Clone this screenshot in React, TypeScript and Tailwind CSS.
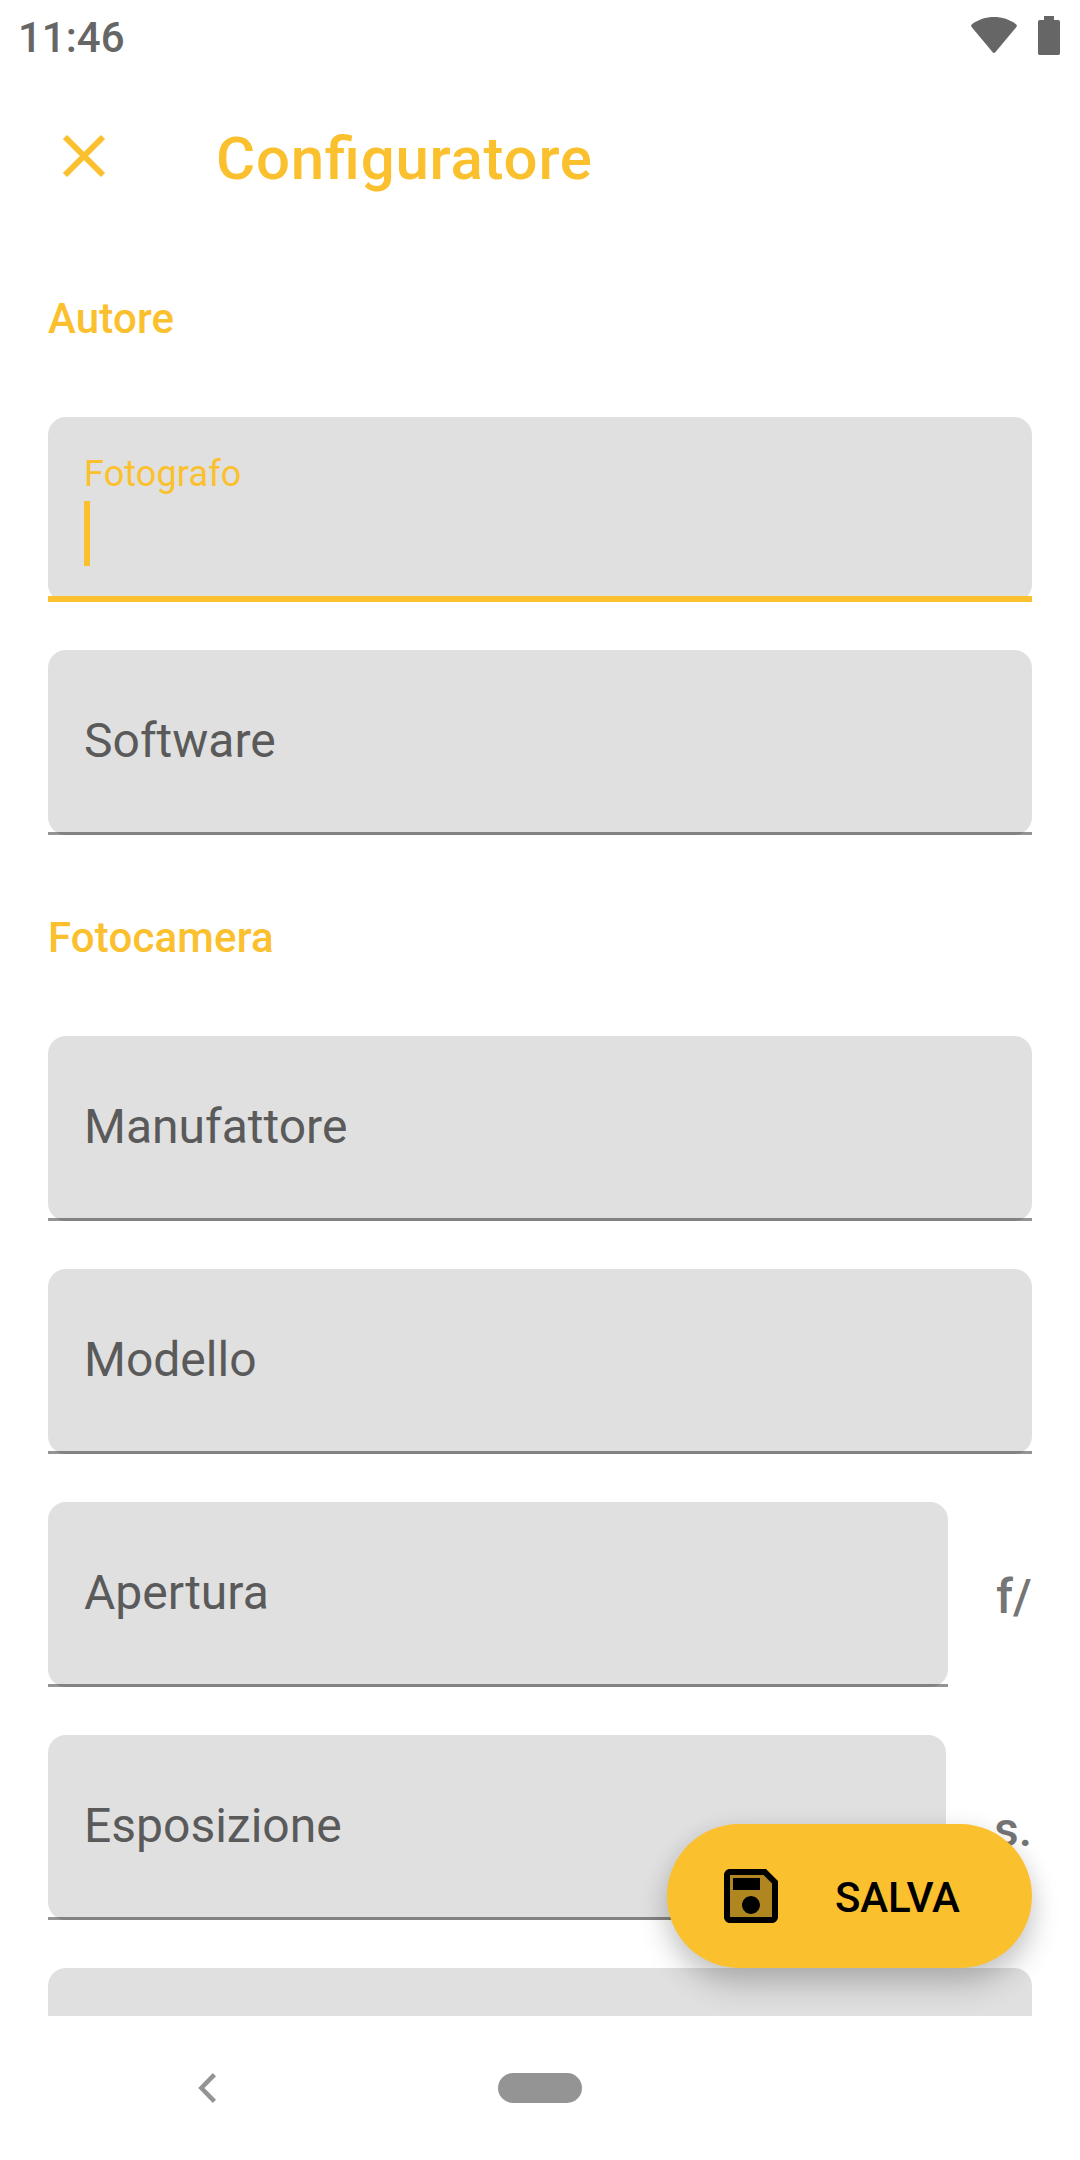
import React, { useState } from 'react';
import { clsx } from 'clsx';

type FieldProps = {
  label?: string;
  unit?: string;
  unitClass?: string;
  active?: boolean;
  onFocus?: () => void;
};

function StatusBar() {
  return (
    <div className="flex h-[72px] shrink-0 justify-between pl-[18px] pr-5 text-[#666666]">
      <span className="mt-[13px] text-[42px] leading-[50px] font-medium">11:46</span>
      <div className="flex items-start gap-[21px] pt-4">
        <svg className="mt-px h-9 w-[46px]" viewBox="0 0 46 36" fill="currentColor">
          <path d="M1 7.2C7 2.6 15 0 23 0s16 2.6 22 7.2c1 .8 1.1 1.8.4 2.7L24.3 35.2c-.8.9-1.8.9-2.6 0L.6 9.9C-.1 9 0 8 1 7.2z" />
        </svg>
        <svg className="h-[39px] w-[22px]" viewBox="0 0 22 39" fill="currentColor">
          <path d="M6 0h10v4h4.2c1 0 1.8.8 1.8 1.8v31.4c0 1-.8 1.8-1.8 1.8H1.8C.8 39 0 38.2 0 37.2V5.8C0 4.8.8 4 1.8 4H6z" />
        </svg>
      </div>
    </div>
  );
}

function TopBar() {
  return (
    <header className="flex h-[168px] shrink-0 items-center pl-12 text-[#fbc02d]">
      <button type="button" aria-label="Chiudi" className="size-[72px]">
        <svg className="size-[72px]" viewBox="0 0 72 72" stroke="currentColor" strokeWidth="6">
          <path d="M17 17l38 38M55 17L17 55" />
        </svg>
      </button>
      {/* letter spacing would switch the fi ligature off */}
      <h1 className="ml-24 pt-[5px] text-[60px] leading-[70px] font-medium tracking-[0.75px] [font-feature-settings:'liga']">
        Configuratore
      </h1>
    </header>
  );
}

function Field({ label, unit, unitClass, active, onFocus }: FieldProps) {
  return (
    <div className="flex h-[185px] shrink-0 gap-12">
      <div
        onClick={onFocus}
        className="relative h-full flex-1 rounded-[18px] bg-[#e0e0e0] px-9"
      >
        {active ? (
          <>
            <div className="pt-[36px] text-[36px] leading-[42px] tracking-[0.12px] text-[#fbc02d]">{label}</div>
            <div className="mt-[6px] h-[65px] w-[6px] bg-[#fbc02d]" />
          </>
        ) : (
          <div className="pt-[63px] text-[48px] leading-[56px] text-[#5a5a5a]">{label}</div>
        )}
        {/* underline keeps square corners over the rounded box */}
        <div className={clsx('absolute inset-x-0 bottom-0', active ? 'h-[6px] bg-[#fbc02d]' : 'h-[3px] bg-black/42')} />
      </div>
      {unit && (
        <span className={clsx('shrink-0 pt-[67px] text-[48px] leading-[56px] font-medium text-[#757575]', unitClass)}>
          {unit}
        </span>
      )}
    </div>
  );
}

function SaveButton() {
  return (
    <button
      type="button"
      className="absolute right-12 bottom-12 flex h-36 w-[365px] items-center rounded-full bg-[#fbc02d] pl-12 text-black shadow-[0_18px_30px_rgba(0,0,0,0.19),0_3px_24px_rgba(0,0,0,0.08)]"
    >
      <svg className="size-[72px]" viewBox="0 0 24 24" fill="currentColor">
        <path opacity=".3" d="M5 5v14h14V7.83L16.17 5H5zm7 13c-1.66 0-3-1.34-3-3s1.34-3 3-3 3 1.34 3 3-1.34 3-3 3zm3-8H6V6h9v4z" />
        <path d="M17 3H5c-1.11 0-2 .9-2 2v14c0 1.1.89 2 2 2h14c1.1 0 2-.9 2-2V7l-4-4zm2 16H5V5h11.17L19 7.83V19zm-7-7c-1.66 0-3 1.34-3 3s1.34 3 3 3 3-1.34 3-3-1.34-3-3-3zM6 6h9v4H6z" />
      </svg>
      <span className="ml-12 pt-[3px] text-[42px] leading-[50px] font-medium tracking-[-0.2px]">SALVA</span>
    </button>
  );
}

function NavBar() {
  return (
    <nav className="flex h-36 shrink-0 items-center justify-center text-[#949494]">
      <svg className="mr-[282px] h-[30px] w-[18px]" viewBox="0 0 18 30" fill="none" stroke="currentColor" strokeWidth="4.5">
        <path d="M16.4 1.6L3.4 15l13 13.4" />
      </svg>
      <div className="mr-[300px] h-[30px] w-[84px] rounded-full bg-current" />
    </nav>
  );
}

export default function App() {
  const [focused, setFocused] = useState('Fotografo');
  const bind = (label: string) => ({
    label,
    active: focused === label,
    onFocus: () => setFocused(label),
  });

  return (
    <div className="flex h-[2160px] w-[1080px] flex-col overflow-hidden bg-white font-['Roboto',sans-serif]">
      <StatusBar />
      <TopBar />
      <main className="relative min-h-0 flex-1">
        <div className="flex h-full flex-col gap-12 overflow-hidden px-12">
          <h2 className="h-[129px] shrink-0 pt-[54px] text-[42px] leading-[50px] font-medium tracking-[0.15px] text-[#fbc02d]">Autore</h2>
          <Field {...bind('Fotografo')} />
          <Field {...bind('Software')} />
          <h2 className="h-[105px] shrink-0 pt-[30px] text-[42px] leading-[50px] font-medium tracking-[0.15px] text-[#fbc02d]">Fotocamera</h2>
          <Field {...bind('Manufattore')} />
          <Field {...bind('Modello')} />
          <Field {...bind('Apertura')} unit="f/" unitClass="w-9" />
          <Field {...bind('Esposizione')} unit="s." unitClass="w-[38px]" />
          <Field />
        </div>
        <SaveButton />
      </main>
      <NavBar />
    </div>
  );
}
